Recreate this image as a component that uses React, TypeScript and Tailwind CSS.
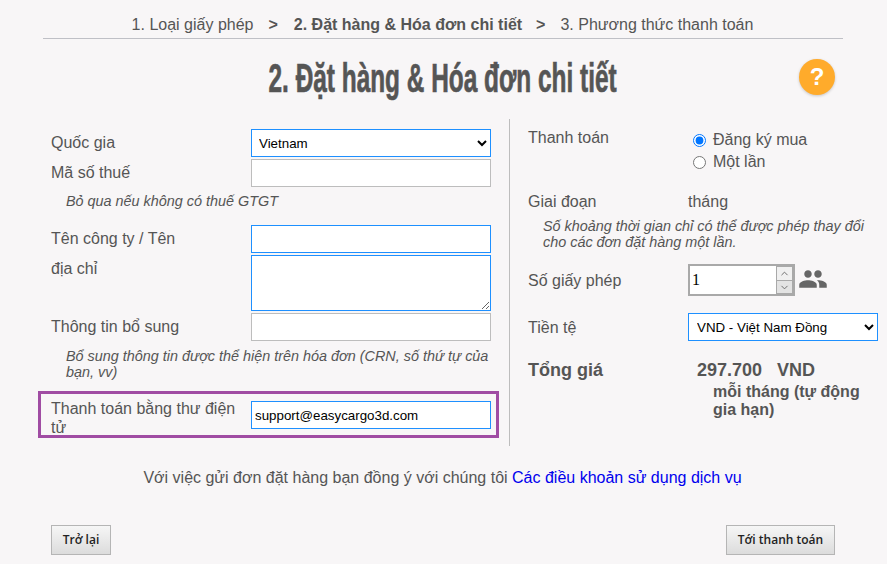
import React from 'react';
import { MdPeople } from 'react-icons/md';
import { ChevronUp, ChevronDown } from 'lucide-react';

const App: React.FC = () => {
  const blueBox = 'w-[240px] h-[28px] border border-[#1e90ff] bg-white outline-none block';
  const grayBox = 'w-[240px] h-[28px] border border-[#bdbdbd] bg-white outline-none block';

  return (
    <div className="w-[887px] h-[564px] overflow-hidden bg-[#f8f6f7] text-[#555] text-[16px] leading-[18px] font-['Liberation_Sans',Arial,sans-serif]">
      <div className="ml-[43px] w-[800px] h-[39px] border-b border-[#bfc0c6] pt-[15px] flex justify-center text-[16px] leading-[19px] whitespace-pre">
        <span className="ml-[-1px]">1. Loại giấy phép</span>
        <b className="ml-[15px]">{'>'}</b>
        <b className="ml-[16px]">2. Đặt hàng &amp; Hóa đơn chi tiết</b>
        <b className="ml-[14px]">{'>'}</b>
        <span className="ml-[15px]">3. Phương thức thanh toán</span>
      </div>

      <div className="relative h-[80px]">
        <h1 className="pt-[16px] pr-[3px] text-center text-[40px] leading-[46px] font-bold text-[#555] scale-x-[0.61] [-webkit-text-stroke:0.7px_#555]">2. Đặt hàng &amp; Hóa đơn chi tiết</h1>
        <div className="absolute left-[799px] top-[20px] w-[36px] h-[36px] rounded-full bg-[#ffab2b] shadow-[0_1px_3px_rgba(0,0,0,0.2)] text-white font-bold text-[24px] leading-[36px] text-center">?</div>
      </div>

      <div className="flex ml-[38px] h-[327px]">
        <div className="w-[471px] pt-[10px]">
          <div className="ml-[13px]">
            <div className="flex items-center">
              <label className="w-[200px] pb-[1px]">Quốc gia</label>
              <select defaultValue="Vietnam" className={`${blueBox} pl-[3px] text-[13.33px] text-black`}>
                <option>Vietnam</option>
              </select>
            </div>
            <div className="flex mt-[2px]">
              <label className="w-[200px] pt-[5px]">Mã số thuế</label>
              <input type="text" className={grayBox} />
            </div>
            <p className="ml-[15px] mt-[6px] text-[14.4px] leading-[16px] italic">Bỏ qua nếu không có thuế GTGT</p>

            <div className="flex mt-[16px]">
              <label className="w-[200px] pt-[5px]">Tên công ty / Tên</label>
              <input type="text" className={blueBox} />
            </div>
            <div className="flex mt-[2px]">
              <label className="w-[200px] pt-[5px]">địa chỉ</label>
              <textarea className="w-[240px] h-[56px] border border-[#1e90ff] bg-white outline-none block" />
            </div>
            <div className="flex mt-[2px]">
              <label className="w-[200px] pt-[5px]">Thông tin bổ sung</label>
              <input type="text" className={grayBox} />
            </div>
            <p className="ml-[15px] mt-[7px] w-[425px] text-[14.4px] leading-[16px] italic">Bổ sung thông tin được thể hiện trên hóa đơn (CRN, số thứ tự của bạn, vv)</p>
          </div>

          <div className="mt-[11px] w-[461px] h-[47px] border-[3px] border-[#a04ca3] flex pl-[10px] pt-[7px]">
            <label className="w-[200px] -mt-[2px] leading-[19px]">Thanh toán bằng thư điện tử</label>
            <input type="text" defaultValue="support@easycargo3d.com" className={`${blueBox} px-[3px] text-[13.33px] text-black`} />
          </div>
        </div>

        <div className="w-[1px] bg-[#bdbdbd]" />

        <div className="ml-[18px] w-[350px] pt-[10px]">
          <div className="flex">
            <label className="w-[160px]">Thanh toán</label>
            <div className="ml-[5px]">
              <label className="flex items-center gap-[7px] h-[22px]">
                <input type="radio" name="pay" defaultChecked className="w-[13px] h-[13px] accent-[#0075ff]" />
                Đăng ký mua
              </label>
              <label className="flex items-center gap-[7px] h-[22px]">
                <input type="radio" name="pay" className="w-[13px] h-[13px]" />
                Một lần
              </label>
            </div>
          </div>
          <div className="flex mt-[20px]">
            <label className="w-[160px]">Giai đoạn</label>
            <span>tháng</span>
          </div>
          <p className="ml-[15px] mt-[7px] text-[14.4px] leading-[16px] italic">Số khoảng thời gian chỉ có thể được phép thay đổi cho các đơn đặt hàng một lần.</p>

          <div className="flex items-center mt-[14px]">
            <label className="w-[160px] pt-[2px]">Số giấy phép</label>
            <div className="w-[107px] h-[32px] border-2 border-[#a9a9a9] bg-white flex items-center">
              <input type="text" defaultValue="1" className="flex-1 min-w-0 pl-[2px] text-[16px] text-black outline-none font-['Liberation_Serif',serif]" />
              <div className="w-[17px] h-[28px] border border-[#a9a9a9] flex flex-col">
                <div className="h-[14px] border-b border-[#a9a9a9] bg-[#f0f0f0] flex items-center justify-center text-[#666]"><ChevronUp size={11} /></div>
                <div className="h-[12px] bg-[#e3e3e3] flex items-center justify-center text-[#666]"><ChevronDown size={11} /></div>
              </div>
            </div>
            <MdPeople size={30} className="ml-[3px] mb-[2px] text-[#666]" />
          </div>

          <div className="flex items-center mt-[17px]">
            <label className="w-[160px] pt-[2px]">Tiền tệ</label>
            <select defaultValue="VND" className="w-[190px] h-[28px] border border-[#1e90ff] bg-white outline-none pl-[4px] text-[13.33px] text-black">
              <option value="VND">VND - Việt Nam Đồng</option>
            </select>
          </div>

          <div className="flex mt-[19px] font-bold">
            <label className="w-[169px] text-[18px] leading-[20px]">Tổng giá</label>
            <div className="text-[18px] leading-[20px] whitespace-pre">297.700   VND</div>
          </div>
          <p className="ml-[185px] mt-[3px] w-[165px] font-bold leading-[18px]">mỗi tháng (tự động gia hạn)</p>
        </div>
      </div>

      <p className="mt-[23px] pr-[2px] text-center leading-[18px]">
        Với việc gửi đơn đặt hàng bạn đồng ý với chúng tôi <a href="#" className="text-[#0000ee]">Các điều khoản sử dụng dịch vụ</a>
      </p>

      <div className="flex justify-between ml-[51px] mr-[52px] mt-[38px]">
        <button className="w-[60px] h-[30px] border border-[#b5b5b5] bg-gradient-to-b from-[#f6f6f6] to-[#dcdcdc] text-[12px] text-[#222] font-['Open_Sans',sans-serif] font-semibold">Trở lại</button>
        <button className="w-[109px] h-[30px] border border-[#b5b5b5] bg-gradient-to-b from-[#f6f6f6] to-[#dcdcdc] text-[12px] text-[#222] font-['Open_Sans',sans-serif] font-semibold">Tới thanh toán</button>
      </div>
    </div>
  );
};

export default App;
